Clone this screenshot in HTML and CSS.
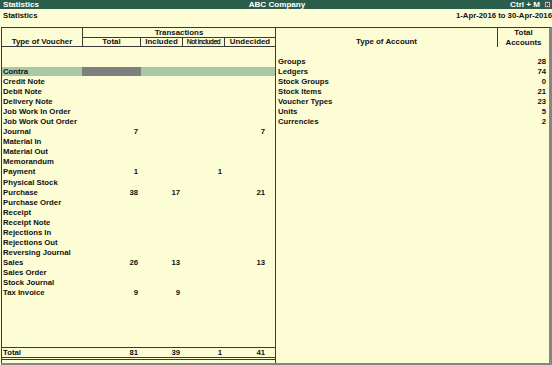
FILE: index.html
```html
<!DOCTYPE html>
<html>
<head>
<meta charset="utf-8">
<link rel="stylesheet" href="styles.css">
</head>
<body>
<div class="win">
  <div class="titlebar">
    <span class="tb-left">Statistics</span>
    <span class="tb-center">ABC Company</span>
    <span class="tb-right">Ctrl + M
      <svg class="close" width="7" height="7" viewBox="0 0 7 7"><rect x="0" y="0" width="7" height="7" fill="#d4d4d4"/><rect x="0.5" y="0.5" width="6" height="6" fill="none" stroke="#555" stroke-width="1"/><path d="M1.8 1.8 L5.2 5.2 M5.2 1.8 L1.8 5.2" stroke="#222" stroke-width="1.1"/></svg>
    </span>
  </div>
  <div class="subbar">
    <span>Statistics</span>
    <span>1-Apr-2016 to 30-Apr-2016</span>
  </div>
  <div class="main">
    <section class="vpane">
      <div class="vhead">
        <div class="h-type">Type of Voucher</div>
        <div class="h-trans">Transactions</div>
        <div class="h-sub">Total</div>
        <div class="h-sub">Included</div>
        <div class="h-sub h-notinc">Not included</div>
        <div class="h-sub h-last">Undecided</div>
      </div>
      <div class="vbody">
        <div class="vrow sel"><span class="name">Contra</span><span class="num tot"></span><span class="num"></span><span class="num"></span><span class="num und"></span></div>
        <div class="vrow"><span class="name">Credit Note</span><span class="num tot"></span><span class="num"></span><span class="num"></span><span class="num und"></span></div>
        <div class="vrow"><span class="name">Debit Note</span><span class="num tot"></span><span class="num"></span><span class="num"></span><span class="num und"></span></div>
        <div class="vrow"><span class="name">Delivery Note</span><span class="num tot"></span><span class="num"></span><span class="num"></span><span class="num und"></span></div>
        <div class="vrow"><span class="name">Job Work In Order</span><span class="num tot"></span><span class="num"></span><span class="num"></span><span class="num und"></span></div>
        <div class="vrow"><span class="name">Job Work Out Order</span><span class="num tot"></span><span class="num"></span><span class="num"></span><span class="num und"></span></div>
        <div class="vrow"><span class="name">Journal</span><span class="num tot">7</span><span class="num"></span><span class="num"></span><span class="num und">7</span></div>
        <div class="vrow"><span class="name">Material In</span><span class="num tot"></span><span class="num"></span><span class="num"></span><span class="num und"></span></div>
        <div class="vrow"><span class="name">Material Out</span><span class="num tot"></span><span class="num"></span><span class="num"></span><span class="num und"></span></div>
        <div class="vrow"><span class="name">Memorandum</span><span class="num tot"></span><span class="num"></span><span class="num"></span><span class="num und"></span></div>
        <div class="vrow"><span class="name">Payment</span><span class="num tot">1</span><span class="num"></span><span class="num">1</span><span class="num und"></span></div>
        <div class="vrow"><span class="name">Physical Stock</span><span class="num tot"></span><span class="num"></span><span class="num"></span><span class="num und"></span></div>
        <div class="vrow"><span class="name">Purchase</span><span class="num tot">38</span><span class="num">17</span><span class="num"></span><span class="num und">21</span></div>
        <div class="vrow"><span class="name">Purchase Order</span><span class="num tot"></span><span class="num"></span><span class="num"></span><span class="num und"></span></div>
        <div class="vrow"><span class="name">Receipt</span><span class="num tot"></span><span class="num"></span><span class="num"></span><span class="num und"></span></div>
        <div class="vrow"><span class="name">Receipt Note</span><span class="num tot"></span><span class="num"></span><span class="num"></span><span class="num und"></span></div>
        <div class="vrow"><span class="name">Rejections In</span><span class="num tot"></span><span class="num"></span><span class="num"></span><span class="num und"></span></div>
        <div class="vrow"><span class="name">Rejections Out</span><span class="num tot"></span><span class="num"></span><span class="num"></span><span class="num und"></span></div>
        <div class="vrow"><span class="name">Reversing Journal</span><span class="num tot"></span><span class="num"></span><span class="num"></span><span class="num und"></span></div>
        <div class="vrow"><span class="name">Sales</span><span class="num tot">26</span><span class="num">13</span><span class="num"></span><span class="num und">13</span></div>
        <div class="vrow"><span class="name">Sales Order</span><span class="num tot"></span><span class="num"></span><span class="num"></span><span class="num und"></span></div>
        <div class="vrow"><span class="name">Stock Journal</span><span class="num tot"></span><span class="num"></span><span class="num"></span><span class="num und"></span></div>
        <div class="vrow"><span class="name">Tax Invoice</span><span class="num tot">9</span><span class="num">9</span><span class="num"></span><span class="num und"></span></div>
      </div>
      <div class="vrow vtotal"><span class="name">Total</span><span class="num tot">81</span><span class="num">39</span><span class="num">1</span><span class="num und">41</span></div>
    </section>
    <section class="apane">
      <div class="ahead">
        <div class="a-type">Type of Account</div>
        <div class="a-total">Total<br>Accounts</div>
      </div>
      <div class="abody">
        <div class="arow"><span>Groups</span><span>28</span></div>
        <div class="arow"><span>Ledgers</span><span>74</span></div>
        <div class="arow"><span>Stock Groups</span><span>0</span></div>
        <div class="arow"><span>Stock Items</span><span>21</span></div>
        <div class="arow"><span>Voucher Types</span><span>23</span></div>
        <div class="arow"><span>Units</span><span>5</span></div>
        <div class="arow"><span>Currencies</span><span>2</span></div>
      </div>
    </section>
  </div>
</div>
</body>
</html>
```
FILE: styles.css
```css
* { box-sizing: border-box; }
html, body { margin: 0; padding: 0; }
body {
  background: #fdfdd5;
  font-family: "Liberation Sans", Arial, sans-serif;
  font-weight: bold;
  color: #111;
  font-size: 7.75px;
}
.win {
  width: 552px;
  height: 365px;
  display: flex;
  flex-direction: column;
  overflow: hidden;
}
.titlebar {
  height: 9px;
  background: #2b5d4b;
  color: #fff;
  font-size: 8.1px;
  line-height: 8px;
  padding: 1px 1px 0 3px;
  display: grid;
  grid-template-columns: 1fr auto 1fr;
  white-space: nowrap;
}
.tb-right {
  justify-self: end;
  display: flex;
  align-items: flex-start;
  gap: 4px;
}
.close { display: block; margin-top: 0; }
.subbar {
  height: 18px;
  padding: 2px 0 0 3px;
  line-height: 10px;
  display: flex;
  justify-content: space-between;
}
.main {
  flex: 1;
  margin-left: 1px;
  border-top: 1px solid #3a3a3a;
  border-right: 3px solid #858585;
  border-bottom: 2px solid #858585;
  display: flex;
}
.vpane {
  width: 275px;
  border-left: 1px solid #3a3a3a;
  border-right: 1px solid #3a3a3a;
  display: flex;
  flex-direction: column;
  padding-bottom: 3px;
}
.vhead {
  display: grid;
  grid-template-columns: 81px 58px 42px 42px 50px;
  grid-template-rows: 10px 8px;
  border-bottom: 1px solid #3a3a3a;
  font-size: 7.9px;
  text-align: center;
  white-space: nowrap;
}
.h-type {
  grid-row: 1 / 3;
  grid-column: 1;
  border-right: 1px solid #3a3a3a;
  align-self: stretch;
  display: flex;
  align-items: flex-end;
  justify-content: center;
  line-height: 8px;
}
.h-trans {
  grid-column: 2 / 6;
  grid-row: 1;
  border-bottom: 1px solid #3a3a3a;
  line-height: 9px;
}
.h-sub {
  grid-row: 2;
  line-height: 8px;
  border-right: 1px solid #3a3a3a;
  overflow: hidden;
}
.h-last { border-right: 0; }
.h-notinc {
  font-size: 6.8px;
  letter-spacing: -0.35px;
  font-weight: normal;
  -webkit-text-stroke: 0.25px #111;
}
.vbody {
  flex: 1;
  padding-top: 20px;
}
.vrow {
  display: grid;
  grid-template-columns: 81px 58px 42px 42px 50px;
  height: 10.05px;
  line-height: 10.05px;
  white-space: nowrap;
}
.vrow .name { padding-left: 1px; }
.vrow .num { text-align: right; padding-right: 3px; }
.vrow .num.und { padding-right: 10px; }
.vrow.sel {
  background: linear-gradient(#a8c8a6, #a8c8a6) 0 0 / 100% 9px no-repeat;
}
.vrow.sel .tot {
  background: linear-gradient(#7f7f7f, #7f7f7f) 0 0 / 100% 9px no-repeat;
  margin-left: -1px;
}
.vtotal {
  height: 13px;
  line-height: 9px;
  border-top: 1px solid #3a3a3a;
  border-bottom: 3px double #3a3a3a;
}
.apane {
  flex: 1;
  display: flex;
  flex-direction: column;
}
.ahead {
  display: grid;
  grid-template-columns: 1fr 52px;
  height: 19px;
  font-size: 7.9px;
  text-align: center;
}
.a-type {
  display: flex;
  align-items: flex-end;
  justify-content: center;
  line-height: 8px;
  padding-bottom: 1px;
}
.a-total {
  border-left: 1px solid #3a3a3a;
  line-height: 9.5px;
  padding-top: 0;
}
.abody {
  padding-top: 10px;
}
.arow {
  display: flex;
  justify-content: space-between;
  height: 10px;
  line-height: 10px;
  padding: 0 3px 0 2px;
}
```
